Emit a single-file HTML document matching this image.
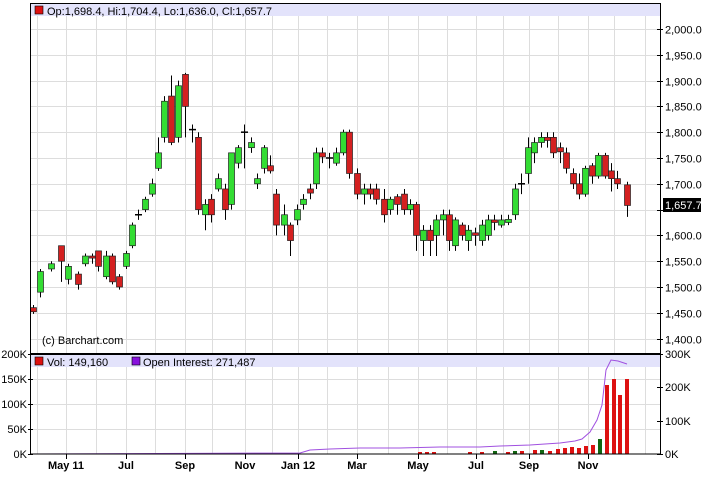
<!DOCTYPE html>
<html><head><meta charset="utf-8"><style>
body{margin:0;background:#fff;width:714px;height:474px;overflow:hidden;font-family:"Liberation Sans",sans-serif}
svg text{font-family:"Liberation Sans",sans-serif;font-size:11px;fill:#000}
</style></head><body>
<svg id="s" width="714" height="474" xmlns="http://www.w3.org/2000/svg">
<rect x="0" y="0" width="714" height="474" fill="#fff"/>
<g id="grid"></g>
<rect x="31" y="4" width="629" height="12" fill="#e3e3fb"/>
<rect x="31" y="355" width="629" height="12" fill="#e3e3fb"/>
<g id="c"></g>
<g id="v"></g>
<polyline fill="none" stroke="#a050e0" stroke-width="1" points="30,454 300,453 310,450 330,449 360,448 400,448 440,447 480,447 500,446 530,445 545,444 560,443 575,441 582,439 590,432 597,420 602,405 606,370 611,360 618,361 627,364"/>
<rect x="30.5" y="3.5" width="630" height="450.5" fill="none" stroke="#000"/>
<line x1="30" y1="354" x2="661" y2="354" stroke="#000" stroke-width="2"/>
<rect x="35" y="6" width="8" height="8" fill="#dd1111" stroke="#000" stroke-width="0.6"/>
<text x="47" y="15">Op:1,698.4, Hi:1,704.4, Lo:1,636.0, Cl:1,657.7</text>
<text x="42" y="344">(c) Barchart.com</text>
<rect x="35" y="357" width="8" height="8" fill="#dd1111" stroke="#000" stroke-width="0.6"/>
<text x="47" y="366">Vol: 149,160</text>
<rect x="132" y="357" width="8" height="8" fill="#8811dd" stroke="#000" stroke-width="0.6"/>
<text x="143" y="366">Open Interest: 271,487</text>
<g id="ax"></g>
<rect x="663" y="198" width="38" height="14" fill="#000"/>
<text x="665" y="209" style="fill:#fff">1,657.7</text>
</svg>
<script>
var NS="http://www.w3.org/2000/svg";
function el(p,t,a,txt){var e=document.createElementNS(NS,t);for(var k in a)e.setAttribute(k,a[k]);if(txt)e.textContent=txt;document.getElementById(p).appendChild(e);return e;}
function Y(p){return 29+(2000-p)*0.516;}
var gx=[37,66,96,126,155,185,212,245,272,298,327,357,388,418,447,476,503,529,558,588,614,645];
gx.forEach(function(x){el("grid","line",{x1:x+.5,x2:x+.5,y1:4,y2:454,stroke:"#ddd"});});
for(var p=1400;p<=2000;p+=50){var y=Math.round(Y(p))+.5;el("grid","line",{x1:30,x2:660,y1:y,y2:y,stroke:"#ddd"});
 el("ax","line",{x1:657,x2:663,y1:y,y2:y,stroke:"#000"});
 if(p!=1650)el("ax","text",{x:665,y:y+4},(p/1000|0)+","+String(p%1000).padStart(3,"0")+".0");}
[[354,"200K"],[379,"150K"],[404,"100K"],[429,"50K"],[454,"0K"]].forEach(function(a){var y=a[0]+.5;el("ax","line",{x1:28,x2:33,y1:y,y2:y,stroke:"#000"});el("ax","text",{x:27,y:a[0]+4,"text-anchor":"end"},a[1]);});
[[354,"300K"],[387,"200K"],[421,"100K"],[454,"0K"]].forEach(function(a){var y=a[0]+.5;el("ax","line",{x1:657,x2:663,y1:y,y2:y,stroke:"#000"});el("ax","text",{x:665,y:a[0]+4},a[1]);});
el("grid","line",{x1:30,x2:660,y1:379.5,y2:379.5,stroke:"#ddd"});el("grid","line",{x1:30,x2:660,y1:404.5,y2:404.5,stroke:"#ddd"});el("grid","line",{x1:30,x2:660,y1:429.5,y2:429.5,stroke:"#ddd"});
[[66,"May 11"],[126,"Jul"],[185,"Sep"],[245,"Nov"],[298,"Jan 12"],[357,"Mar"],[418,"May"],[476,"Jul"],[529,"Sep"],[588,"Nov"]].forEach(function(a){el("ax","line",{x1:a[0]+.5,x2:a[0]+.5,y1:454,y2:459,stroke:"#000"});el("ax","text",{x:a[0],y:469,"text-anchor":"middle","font-weight":"bold"},a[1]);});
var d=[[33,1460,1452,1465,1448],[40,1490,1530,1535,1480],[51,1535,1545,1550,1530],[61,1580,1550,1580,1510],[68,1515,1540,1545,1505],[78,1525,1505,1530,1495],[85,1545,1560,1565,1540],[92,1560,1556,1565,1545],[98,1570,1540,1570,1530],[106,1520,1560,1570,1515],[112,1560,1510,1565,1505],[119,1520,1500,1525,1495],[126,1540,1565,1570,1535],[132,1580,1620,1625,1575],[138,1640,1641,1650,1630],[145,1650,1670,1675,1645],[152,1680,1700,1710,1675],[158,1730,1760,1790,1725],[164,1790,1860,1870,1780],[171,1870,1780,1910,1775],[178,1790,1890,1900,1780],[185,1912,1850,1915,1790],[192,1805,1806,1815,1780],[198,1790,1650,1800,1640],[205,1640,1660,1670,1610],[211,1670,1640,1680,1625],[218,1690,1710,1720,1685],[225,1690,1650,1700,1630],[231,1660,1760,1760,1650],[238,1740,1770,1775,1730],[244,1800,1801,1815,1730],[251,1770,1780,1790,1760],[257,1700,1710,1720,1690],[264,1730,1770,1775,1720],[270,1735,1725,1755,1720],[276,1680,1620,1690,1600],[284,1620,1640,1660,1600],[290,1620,1590,1625,1560],[297,1630,1650,1660,1620],[303,1660,1670,1680,1650],[310,1690,1682,1700,1670],[316,1700,1760,1770,1690],[322,1760,1752,1770,1740],[329,1750,1751,1760,1730],[336,1740,1760,1770,1735],[343,1760,1800,1805,1755],[349,1800,1720,1805,1710],[357,1720,1680,1730,1670],[364,1680,1690,1700,1660],[370,1690,1680,1700,1670],[376,1690,1670,1700,1660],[384,1670,1640,1690,1625],[390,1650,1670,1675,1640],[397,1675,1660,1680,1640],[404,1680,1650,1690,1640],[410,1650,1660,1670,1640],[416,1660,1600,1665,1570],[423,1590,1610,1620,1560],[430,1610,1590,1620,1560],[436,1600,1630,1640,1560],[443,1630,1640,1650,1600],[449,1640,1590,1650,1570],[455,1580,1630,1635,1570],[462,1620,1600,1625,1590],[468,1590,1610,1620,1570],[475,1605,1600,1615,1580],[482,1590,1620,1630,1580],[488,1600,1630,1640,1590],[494,1630,1625,1640,1610],[501,1620,1630,1640,1615],[508,1625,1631,1640,1620],[515,1640,1690,1700,1630],[521,1700,1701,1720,1680],[528,1720,1770,1790,1700],[534,1760,1780,1790,1740],[541,1780,1790,1800,1770],[547,1790,1784,1800,1770],[553,1790,1760,1800,1750],[560,1770,1762,1780,1740],[566,1760,1730,1770,1720],[573,1720,1700,1730,1690],[579,1700,1680,1720,1670],[585,1680,1730,1735,1675],[592,1735,1715,1740,1700],[598,1715,1755,1760,1710],[605,1755,1715,1760,1710],[611,1725,1710,1740,1685],[617,1710,1700,1725,1690],[627,1698,1658,1704,1636]];
d.forEach(function(c){var x=c[0],o=c[1],cl=c[2],h=c[3],l=c[4];
 el("c","line",{x1:x+.5,x2:x+.5,y1:Y(h),y2:Y(l),stroke:"#000"});
 var t=Y(Math.max(o,cl)),b=Y(Math.min(o,cl));
 if(b-t<2){el("c","line",{x1:x-3,x2:x+4,y1:t+.5,y2:t+.5,stroke:"#000","stroke-width":1.5});}
 else el("c","rect",{x:x-2.5,y:t,width:6,height:b-t,fill:cl>o?"#33dd33":"#d42020",stroke:"#222","stroke-width":.7});});
var vb=[[420,452,"r"],[427,452,"r"],[434,452,"r"],[470,452,"r"],[482,452,"r"],[495,451,"g"],[508,452,"r"],[515,451,"g"],[522,451,"r"],[535,450,"r"],[542,450,"g"],[550,451,"r"],[558,449,"r"],[565,448,"r"],[572,447,"r"],[579,448,"r"],[586,446,"r"],[593,445,"r"],[600,439,"g"],[607,385,"r"],[614,379,"r"],[620,395,"r"],[627,379,"r"]];
vb.forEach(function(v){el("v","rect",{x:v[0]-2,y:v[1],width:4,height:454-v[1],fill:v[2]=="r"?"#dd1111":"#116611"});});
</script>
</body></html>
